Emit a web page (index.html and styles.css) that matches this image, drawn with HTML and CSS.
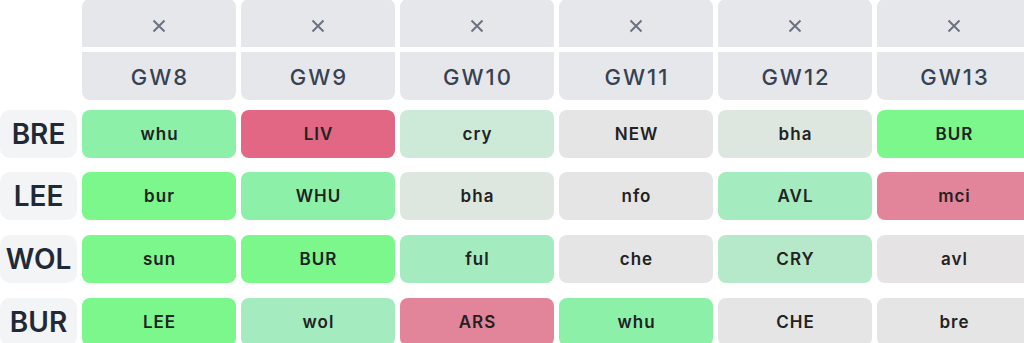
FILE: index.html
```html
<!DOCTYPE html>
<html lang="en">
<head>
<meta charset="utf-8">
<title>Fixtures</title>
<link rel="stylesheet" href="styles.css">
</head>
<body>
<div class="board">
  <div class="head">
    <div class="corner"></div>
    <div class="gw"><div class="gw-x"><svg class="x" viewBox="0 0 14 14"><path d="M1.5 1.5L12.5 12.5M12.5 1.5L1.5 12.5"/></svg></div><div class="gw-name">GW8</div></div>
    <div class="gw"><div class="gw-x"><svg class="x" viewBox="0 0 14 14"><path d="M1.5 1.5L12.5 12.5M12.5 1.5L1.5 12.5"/></svg></div><div class="gw-name">GW9</div></div>
    <div class="gw"><div class="gw-x"><svg class="x" viewBox="0 0 14 14"><path d="M1.5 1.5L12.5 12.5M12.5 1.5L1.5 12.5"/></svg></div><div class="gw-name">GW10</div></div>
    <div class="gw"><div class="gw-x"><svg class="x" viewBox="0 0 14 14"><path d="M1.5 1.5L12.5 12.5M12.5 1.5L1.5 12.5"/></svg></div><div class="gw-name">GW11</div></div>
    <div class="gw"><div class="gw-x"><svg class="x" viewBox="0 0 14 14"><path d="M1.5 1.5L12.5 12.5M12.5 1.5L1.5 12.5"/></svg></div><div class="gw-name">GW12</div></div>
    <div class="gw"><div class="gw-x"><svg class="x" viewBox="0 0 14 14"><path d="M1.5 1.5L12.5 12.5M12.5 1.5L1.5 12.5"/></svg></div><div class="gw-name">GW13</div></div>
  </div>

  <div class="rows">
    <div class="team">BRE</div>
    <div class="fx f-g3">whu</div>
    <div class="fx f-r1">LIV</div>
    <div class="fx f-p1">cry</div>
    <div class="fx f-n">NEW</div>
    <div class="fx f-p0">bha</div>
    <div class="fx f-g4">BUR</div>

    <div class="team">LEE</div>
    <div class="fx f-g4">bur</div>
    <div class="fx f-g3">WHU</div>
    <div class="fx f-p0">bha</div>
    <div class="fx f-n">nfo</div>
    <div class="fx f-g2">AVL</div>
    <div class="fx f-r2">mci</div>

    <div class="team">WOL</div>
    <div class="fx f-g4">sun</div>
    <div class="fx f-g4">BUR</div>
    <div class="fx f-g2">ful</div>
    <div class="fx f-n">che</div>
    <div class="fx f-g1">CRY</div>
    <div class="fx f-n2">avl</div>

    <div class="team">BUR</div>
    <div class="fx f-g4">LEE</div>
    <div class="fx f-g2">wol</div>
    <div class="fx f-r2">ARS</div>
    <div class="fx f-g3">whu</div>
    <div class="fx f-n">CHE</div>
    <div class="fx f-n">bre</div>
  </div>
</div>
</body>
</html>
```

FILE: styles.css
```css
html, body {
  margin: 0;
  padding: 0;
  background: #ffffff;
  overflow: hidden;
}
body {
  font-family: Inter, "Liberation Sans", sans-serif;
  width: 1024px;
  height: 343px;
}
.board {
  display: flex;
  flex-direction: column;
  width: 1040px;
  margin-top: -1px;
}
.head,
.rows {
  display: grid;
  grid-template-columns: 77px repeat(6, 154px);
  column-gap: 5px;
}
.rows {
  grid-auto-rows: 48px;
  row-gap: 14.8px;
  margin-top: 10px;
}
.gw {
  display: flex;
  flex-direction: column;
  gap: 5px;
}
.gw-x {
  height: 48px;
  background: #e5e7eb;
  border-radius: 8px 8px 0 0;
  display: flex;
  justify-content: center;
  align-items: center;
  padding-top: 6px;
  box-sizing: border-box;
}
.x {
  width: 14px;
  height: 14px;
  fill: none;
  stroke: #6b7280;
  stroke-width: 2;
}
.gw-name {
  height: 47.5px;
  background: #e5e7eb;
  border-radius: 0 0 8px 8px;
  display: flex;
  justify-content: center;
  align-items: center;
  padding-left: 2px;
  padding-top: 3px;
  box-sizing: border-box;
  font-size: 22px;
  font-weight: 550;
  color: #374151;
  letter-spacing: 2px;
}
.team {
  background: #f3f4f6;
  border-radius: 10px;
  display: flex;
  justify-content: center;
  align-items: center;
  font-size: 28px;
  font-weight: 600;
  color: #1f2937;
}
.fx {
  border-radius: 8px;
  display: flex;
  justify-content: center;
  align-items: center;
  padding-left: 1px;
  font-size: 17px;
  font-weight: 600;
  color: #222222;
  letter-spacing: 1px;
}
.f-g4 { background: #7bf78b; }
.f-g3 { background: #8cf0a9; }
.f-g2 { background: #a4ecbf; }
.f-g1 { background: #b5e9c9; }
.f-p1 { background: #cde9d8; }
.f-p0 { background: #dee6e0; }
.f-n { background: #e5e5e5; }
.f-n2 { background: #e6e3e4; }
.f-r2 { background: #e3859a; }
.f-r1 { background: #e26784; }
```
